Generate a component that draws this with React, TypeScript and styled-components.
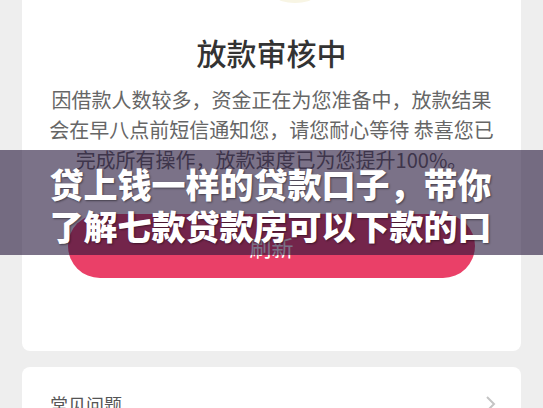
import React from "react";
import styled, { createGlobalStyle } from "styled-components";

const GlobalStyle = createGlobalStyle`
  html, body {
    margin: 0;
    padding: 0;
    background: #eeeeee;
    font-family: "Noto Sans CJK SC", "Noto Sans", sans-serif;
  }
`;

const Page = styled.div`
  position: relative;
  width: 543px;
  height: 408px;
  overflow: hidden;
  padding: 0 22px;
  box-sizing: border-box;
  display: flex;
  flex-direction: column;
  gap: 16px;
`;

const Card = styled.div<{ $top?: boolean }>`
  background: #ffffff;
  border-radius: ${(p) => (p.$top ? "0 0 8px 8px" : "8px")};
  display: flex;
  flex-direction: column;
`;

const StatusCard = styled(Card)`
  align-items: center;
  padding: 0 0 73px;
`;

const Illustration = styled.svg`
  display: block;
  width: 40px;
  height: 6px;
  margin-left: 46px;
`;

const Title = styled.h1`
  margin: 26px 0 0;
  font-size: 30px;
  line-height: 40px;
  font-weight: 500;
  color: #333333;
`;

const Message = styled.p`
  margin: 13px 0 0;
  font-size: 20px;
  line-height: 30px;
  color: #666666;
  text-align: center;
`;

const RefreshButton = styled.button`
  margin-top: 39px;
  width: 407px;
  height: 64px;
  border: none;
  border-radius: 32px;
  background: #ea4068;
  color: #ffffff;
  font-family: inherit;
  font-size: 22px;
  cursor: pointer;
`;

const FaqCard = styled(Card)`
  flex-direction: row;
  justify-content: space-between;
  align-items: center;
  padding: 24px 24px 24px 28px;
`;

const FaqLabel = styled.span`
  font-size: 18px;
  line-height: 26px;
  color: #555555;
`;

const Chevron = styled.svg`
  width: 12px;
  height: 18px;
`;

const Banner = styled.div`
  position: absolute;
  left: 0;
  right: 0;
  top: 150px;
  height: 105px;
  background: rgba(35, 20, 57, 0.6);
  display: flex;
  justify-content: center;
  padding-top: 13px;
  box-sizing: border-box;
`;

const BannerText = styled.div`
  width: 444px;
  height: 84px;
  overflow: hidden;
  font-size: 34px;
  line-height: 42px;
  font-weight: 900;
  color: #ffffff;
  text-shadow: 1px 1px 2px rgba(0, 0, 0, 0.45);
`;

export default function App() {
  return (
    <>
      <GlobalStyle />
      <Page>
        <StatusCard $top>
          <Illustration viewBox="0 0 40 6">
            <ellipse cx="20" cy="-3" rx="18" ry="6" fill="#f8f5e4" />
          </Illustration>
          <Title>放款审核中</Title>
          <Message>
            因借款人数较多，资金正在为您准备中，放款结果
            <br />
            会在早八点前短信通知您，请您耐心等待 恭喜您已
            <br />
            完成所有操作，放款速度已为您提升100%。
          </Message>
          <RefreshButton>刷新</RefreshButton>
        </StatusCard>
        <FaqCard>
          <FaqLabel>常见问题</FaqLabel>
          <Chevron viewBox="0 0 12 18">
            <polyline points="2,2 9,9 2,16" fill="none" stroke="#c4c4c4" strokeWidth="2" />
          </Chevron>
        </FaqCard>
        <Banner>
          <BannerText>贷上钱一样的贷款口子，带你了解七款贷款房可以下款的口子</BannerText>
        </Banner>
      </Page>
    </>
  );
}
